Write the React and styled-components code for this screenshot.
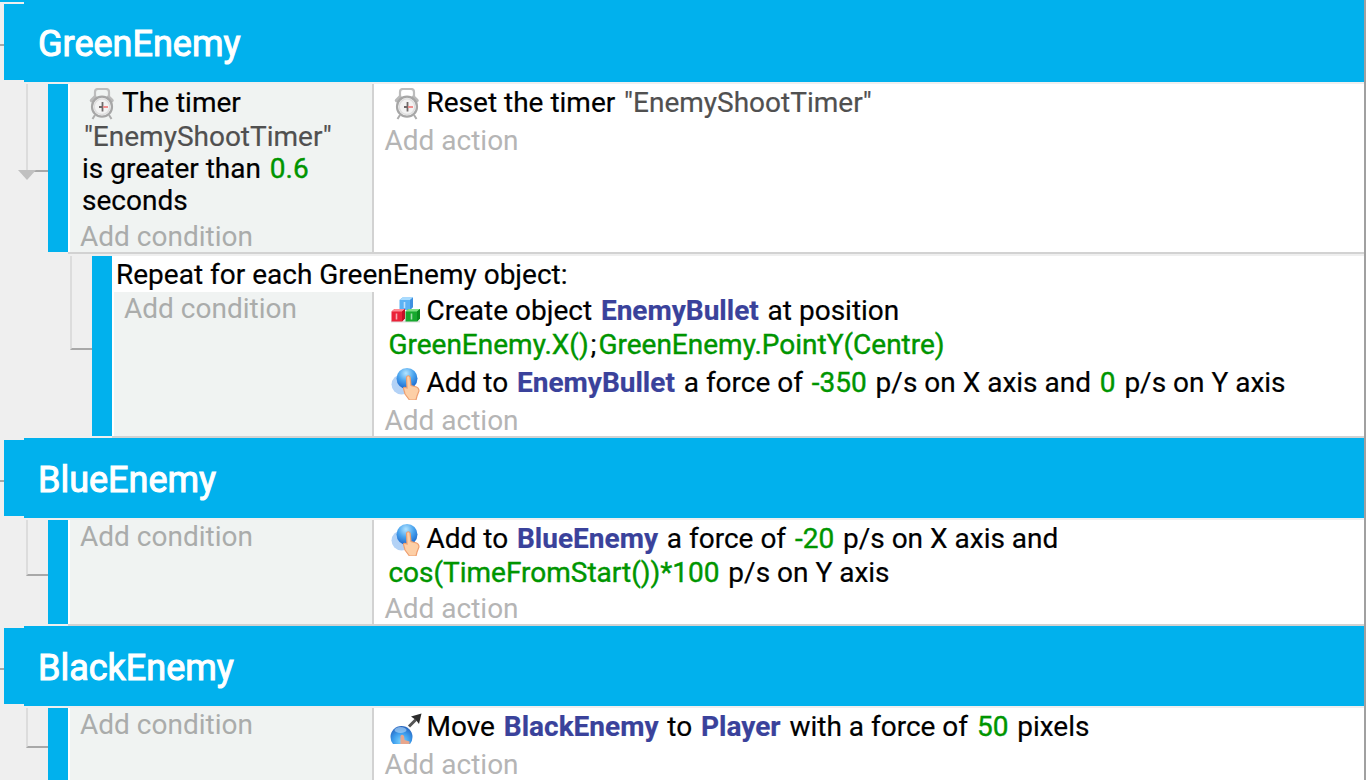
import React from "react";
import styled, { createGlobalStyle } from "styled-components";

const Global = createGlobalStyle`
  * { box-sizing: border-box; }
  html, body { margin: 0; padding: 0; }
  body { background: #efefef; overflow: hidden; font-family: Roboto, "Liberation Sans", sans-serif; }
`;

const Sheet = styled.main`
  width: 1366px;
  height: 780px;
  overflow: hidden;
  background: #efefef;
  border-right: 2px solid #a0a0a0;
  display: flex;
  flex-direction: column;
`;

const GroupRow = styled.header`
  display: flex;
  flex: none;
  height: ${(p) => p.$height}px;
  margin-bottom: 2px;
`;

const GroupHandle = styled.div`
  width: 24px;
  padding: 2px 0;
  border-top: ${(p) => (p.$first ? "2px solid #01b1ed" : "none")};
  display: flex;
  align-items: center;
  &::before { content: ""; width: 4px; height: 2px; background: #a8a8a8; margin-top: 6px; }
  &::after { content: ""; flex: 1; align-self: stretch; background: #01b1ed; }
`;

const GroupTitle = styled.h2`
  flex: 1;
  margin: 0;
  padding: ${(p) => p.$top}px 0 0 14px;
  background: #01b1ed;
  color: #fff;
  font-size: 36px;
  font-weight: 400;
  line-height: 42px;
  white-space: nowrap;
  -webkit-text-stroke: 1px #fff;
`;

const EventRow = styled.section`
  display: flex;
  flex: none;
  height: ${(p) => p.$height}px;
  margin-bottom: ${(p) => p.$gap || 0}px;
`;

const Gutter = styled.div`
  width: ${(p) => p.$width}px;
  display: flex;
  justify-content: flex-end;
  align-items: flex-start;
`;

const Branch = styled.div`
  width: 22px;
  height: ${(p) => p.$height}px;
  border-left: 2px solid #dcdcdc;
  border-bottom: 2px solid #a8a8a8;
  position: relative;
`;

const Fold = styled.i`
  position: absolute;
  left: -10px;
  bottom: -10px;
  width: 18px;
  height: 10px;
  background: #c0c0c0;
  clip-path: polygon(0 0, 100% 0, 50% 100%);
`;

const Stripe = styled.div`
  width: 20px;
  margin-bottom: ${(p) => (p.$open ? 0 : 2)}px;
  background: #01b1ed;
`;

const Body = styled.div`
  flex: 1;
  display: flex;
  flex-direction: column;
  background: #fff;
  border-bottom: ${(p) => (p.$open ? "none" : "2px solid #d2d2d2")};
`;

const Columns = styled.div`
  flex: 1;
  display: flex;
  padding-left: 2px;
`;

const Conditions = styled.div`
  width: ${(p) => p.$width}px;
  background: #f0f3f2;
  border-right: 2px solid #d2d2d2;
  padding-left: 12px;
`;

const Actions = styled.div`
  flex: 1;
  padding-left: 12.5px;
`;

const Line = styled.div`
  display: flex;
  align-items: flex-start;
  height: 32px;
  margin-top: ${(p) => p.$mt || 0}px;
  font-size: 28px;
  line-height: 34px;
  color: #000;
  white-space: pre;
  -webkit-text-stroke: 0.2px currentColor;
`;

const AddLink = styled(Line)`
  color: ${(p) => (p.$cond ? "#aaacab" : "#b5b5b5")};
  margin-left: -2px;
  -webkit-text-stroke: 0;
`;

const RepeatLine = styled(Line)`
  height: 34px;
  padding-left: 4px;
`;

const Icon = styled.svg.attrs({ width: 32, height: 32, viewBox: "0 0 32 32", fill: "none" })`
  flex: none;
  margin: 2px 5px 0 3px;
  filter: blur(0.7px);
`;

const Param = styled.span`padding: 0 1.9px;`;
const Num = styled(Param)`color: #009500; -webkit-text-stroke-width: 0.4px;`;
const Str = styled(Param)`color: #505050;`;
const Obj = styled(Param)`color: #3a429b; font-weight: 700;`;

const Clock = () => (
  <Icon>
    <path d="M10 8V4q0-3 3-3h8q3 0 3 3v4" stroke="#bdbdbd" strokeWidth="2.2" />
    <path d="M6.500 12.500l3.500-3.500M27 12.500l-3.500-3.500" stroke="#bababa" strokeWidth="3.500" strokeLinecap="round" />
    <path d="M10 27l-2.500 4M24 27l2.500 4" stroke="#adadad" strokeWidth="2" />
    <circle cx="17" cy="18.700" r="10" fill="#f3f3f3" stroke="#a6a6a6" strokeWidth="2.2" />
    <circle cx="17" cy="18.700" r="7.800" stroke="#dedede" strokeWidth="1.400" />
    <path d="M17.500 14v9.500M14 19h4" stroke="#706a6a" strokeWidth="1.800" />
    <path d="M18 19h5" stroke="#f09090" strokeWidth="2" />
  </Icon>
);

const Cubes = () => (
  <Icon>
    <path d="M1 25.500h29" stroke="#ddd" strokeWidth="2" />
    <path d="M9.500 4l3-2.500H23V11l-3 3H9.500z" fill="#5bb2f4" />
    <path d="M9.500 4l3-2.500H23L20 4z" fill="#a9dcff" />
    <path d="M20 4l3-2.500V11l-3 3z" fill="#3f90e0" />
    <path d="M1.500 15.500L4.500 13H15v9.500l-3 3H1.500z" fill="#ea2238" />
    <path d="M1.500 15.500L4.500 13H15l-3 2.500z" fill="#ff8c94" />
    <path d="M12 15.500l3-2.500v9.500l-3 3z" fill="#c31127" />
    <path d="M15.500 15.500l3-2.500H30v9.500l-3 3H15.500z" fill="#17a92e" />
    <path d="M15.500 15.500l3-2.500H30l-3 2.500z" fill="#7ee083" />
    <path d="M27 15.500l3-2.500v9.500l-3 3z" fill="#0b8a1f" />
    <path d="M14.500 6v6M6.500 17.500v6M21.500 17.500v6" stroke="#fff" strokeOpacity=".6" strokeWidth="1.600" />
  </Icon>
);

const Ball = ({ id }) => (
  <radialGradient id={id} cx=".45" cy=".25" r=".75">
    <stop offset="0" stopColor="#b4e4ff" />
    <stop offset=".5" stopColor="#4aa4ee" />
    <stop offset="1" stopColor="#1a66cc" />
  </radialGradient>
);

const Force = ({ id }) => (
  <Icon>
    <defs><Ball id={id} /></defs>
    <circle cx="11.500" cy="16.500" r="10" fill="#b3d2f6" />
    <circle cx="17" cy="10.500" r="10.500" fill={`url(#${id})`} />
    <path d="M16.500 9q1.500-2.500 3.500 0l1 8.500 5.500 1.500q2.500 1 2.500 4l-2 5-1 4h-6.500l-4.500-6-1.500-5.500q0-2 3.500-.5z" fill="#fdcfa6" stroke="#ee9f70" strokeWidth="1.200" />
  </Icon>
);

const MoveTo = () => (
  <Icon>
    <defs>
      <radialGradient id="move" cx=".5" cy=".7" r=".7">
        <stop offset="0" stopColor="#7fd6ff" />
        <stop offset=".55" stopColor="#3c9cec" />
        <stop offset="1" stopColor="#2562bd" />
      </radialGradient>
    </defs>
    <circle cx="11.500" cy="25" r="11" fill="url(#move)" />
    <ellipse cx="10.500" cy="18" rx="6" ry="3" fill="#b8dcfa" fillOpacity=".6" />
    <path d="M10.500 32v-8q1.500-2.500 3.500 0l.5 4 5 1.500V32z" fill="#e8a68c" />
    <path d="M19 14.500l7-7" stroke="#555" strokeWidth="3" />
    <path d="M21 4.500L31.500 1.500 29 12l-3-4z" fill="#2c2c2c" />
  </Icon>
);

const Group = ({ title, first }) => (
  <GroupRow $height={first ? 82 : 80}>
    <GroupHandle $first={first} />
    <GroupTitle $top={first ? 23 : 21}>{title}</GroupTitle>
  </GroupRow>
);

export default function App() {
  return (
    <Sheet>
      <Global />
      <Group title="GreenEnemy" first />
      <EventRow $height={170} $gap={2}>
        <Gutter $width={48}><Branch $height={88}><Fold /></Branch></Gutter>
        <Stripe />
        <Body>
          <Columns>
            <Conditions $width={304}>
              <Line $mt={2}><Clock />The timer</Line>
              <Line $mt={2}><Str>"EnemyShootTimer"</Str></Line>
              <Line>is greater than <Num>0.6</Num></Line>
              <Line>seconds</Line>
              <AddLink $cond $mt={4}>Add condition</AddLink>
            </Conditions>
            <Actions>
              <Line $mt={2}><Clock />Reset the timer <Str>"EnemyShootTimer"</Str></Line>
              <AddLink $mt={6}>Add action</AddLink>
            </Actions>
          </Columns>
        </Body>
      </EventRow>
      <EventRow $height={182}>
        <Gutter $width={92}><Branch $height={94} /></Gutter>
        <Stripe />
        <Body>
          <RepeatLine $mt={2}>Repeat for each GreenEnemy object:</RepeatLine>
          <Columns>
            <Conditions $width={260}>
              <AddLink $cond>Add condition</AddLink>
            </Conditions>
            <Actions>
              <Line $mt={2}><Cubes />Create object <Obj>EnemyBullet</Obj> at position</Line>
              <Line $mt={2}><Num>GreenEnemy.X()</Num>;<Num>GreenEnemy.PointY(Centre)</Num></Line>
              <Line $mt={6}><Force id="f1" />Add to <Obj>EnemyBullet</Obj> a force of <Num>-350</Num> p/s on X axis and <Num>0</Num> p/s on Y axis</Line>
              <AddLink $mt={6}>Add action</AddLink>
            </Actions>
          </Columns>
        </Body>
      </EventRow>
      <Group title="BlueEnemy" />
      <EventRow $height={106}>
        <Gutter $width={48}><Branch $height={56} /></Gutter>
        <Stripe />
        <Body>
          <Columns>
            <Conditions $width={304}>
              <AddLink $cond>Add condition</AddLink>
            </Conditions>
            <Actions>
              <Line $mt={2}><Force id="f2" />Add to <Obj>BlueEnemy</Obj> a force of <Num>-20</Num> p/s on X axis and</Line>
              <Line $mt={2}><Num>cos(TimeFromStart())*100</Num> p/s on Y axis</Line>
              <AddLink $mt={4}>Add action</AddLink>
            </Actions>
          </Columns>
        </Body>
      </EventRow>
      <Group title="BlackEnemy" />
      <EventRow $height={72}>
        <Gutter $width={48}><Branch $height={40} /></Gutter>
        <Stripe $open />
        <Body $open>
          <Columns>
            <Conditions $width={304}>
              <AddLink $cond>Add condition</AddLink>
            </Conditions>
            <Actions>
              <Line $mt={2}><MoveTo />Move <Obj>BlackEnemy</Obj> to <Obj>Player</Obj> with a force of <Num>50</Num> pixels</Line>
              <AddLink $mt={6}>Add action</AddLink>
            </Actions>
          </Columns>
        </Body>
      </EventRow>
    </Sheet>
  );
}
